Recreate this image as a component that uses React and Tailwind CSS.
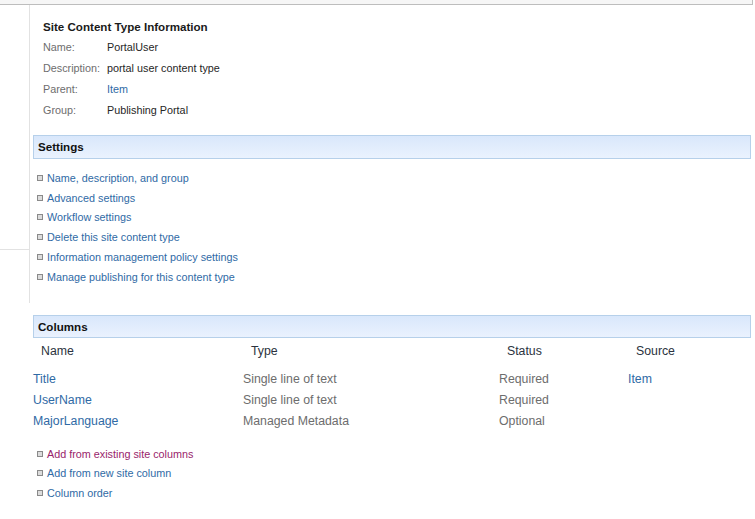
export default function App() {
  const settings = [
    'Name, description, and group',
    'Advanced settings',
    'Workflow settings',
    'Delete this site content type',
    'Information management policy settings',
    'Manage publishing for this content type',
  ];

  const info = [
    { label: 'Name:', value: 'PortalUser' },
    { label: 'Description:', value: 'portal user content type' },
    { label: 'Parent:', value: 'Item', link: true },
    { label: 'Group:', value: 'Publishing Portal' },
  ];

  const columns = [
    { name: 'Title', type: 'Single line of text', status: 'Required', source: 'Item' },
    { name: 'UserName', type: 'Single line of text', status: 'Required', source: '' },
    { name: 'MajorLanguage', type: 'Managed Metadata', status: 'Optional', source: '' },
  ];

  const columnLinks = [
    { text: 'Add from existing site columns', visited: true },
    { text: 'Add from new site column' },
    { text: 'Column order' },
  ];

  const Bullet = () => (
    <span className="w-[6px] h-[6px] border border-[#8a8a8a] bg-[#dcdcdc] shrink-0" />
  );

  return (
    <div className="w-[755px] h-[519px] bg-white text-[10.8px] text-[#333] font-['Liberation_Sans',Arial,sans-serif] overflow-hidden">
      {/* top strip */}
      <div className="h-[5px] w-[753px] bg-[#f6f6f6] border-b border-r border-[#bdbdbd]" />

      <div className="flex">
        {/* left nav */}
        <div className="w-[30px] h-[298px] border-r border-[#e2e2e2] shrink-0">
          <div className="h-[245px] border-b border-[#e2e2e2]" />
        </div>

        <div className="flex-1">
          {/* info */}
          <div className="pl-[13px] pt-[11px]">
            <div className="leading-[21px] text-[11.6px] font-bold text-[#1a1a1a]">Site Content Type Information</div>
            {info.map((r) => (
              <div key={r.label} className="flex leading-[21px]">
                <span className="w-[64px] text-[#6d6d6d]">{r.label}</span>
                <span className={r.link ? 'text-[#2f6aa5]' : 'text-[#262626]'}>{r.value}</span>
              </div>
            ))}
          </div>

          {/* settings */}
          <div className="mt-[14px] ml-[3px] mr-[4px] h-[24px] border border-[#b6d0ea] bg-gradient-to-b from-[#d9e7fb] to-[#eaf2fe] flex items-center pl-[4px] text-[11.6px] font-bold text-[#111]">
            Settings
          </div>
          <div className="mt-[9px]">
            {settings.map((s) => (
              <div key={s} className="flex items-center gap-[4px] pl-[7px] h-[19.8px] text-[#2f6aa5]">
                <Bullet />
                <span>{s}</span>
              </div>
            ))}
          </div>
        </div>
      </div>

      {/* columns */}
      <div className="mt-[12px] ml-[33px] mr-[4px] h-[23px] border border-[#b6d0ea] bg-gradient-to-b from-[#d9e7fb] to-[#eaf2fe] flex items-center pl-[4px] text-[11.6px] font-bold text-[#111]">
        Columns
      </div>
      <div className="ml-[33px] mt-[3px] grid grid-cols-[210px_256px_129px_1fr] h-[20px] items-center text-[12.3px] text-[#2b3340]">
        <span className="pl-2">Name</span>
        <span className="pl-2">Type</span>
        <span className="pl-2">Status</span>
        <span className="pl-2">Source</span>
      </div>
      <div className="ml-[33px] mt-[8px] text-[12.3px]">
        {columns.map((c) => (
          <div key={c.name} className="grid grid-cols-[210px_256px_129px_1fr] h-[21px] items-center">
            <span className="text-[#2f6aa5]">{c.name}</span>
            <span className="text-[#6d6d6d]">{c.type}</span>
            <span className="text-[#6d6d6d]">{c.status}</span>
            <span className="text-[#2f6aa5]">{c.source}</span>
          </div>
        ))}
      </div>
      <div className="mt-[12px] ml-[30px]">
        {columnLinks.map((l) => (
          <div key={l.text} className={`flex items-center gap-[4px] pl-[7px] h-[19.5px] ${l.visited ? 'text-[#99246b]' : 'text-[#2f6aa5]'}`}>
            <Bullet />
            <span>{l.text}</span>
          </div>
        ))}
      </div>
    </div>
  );
}
